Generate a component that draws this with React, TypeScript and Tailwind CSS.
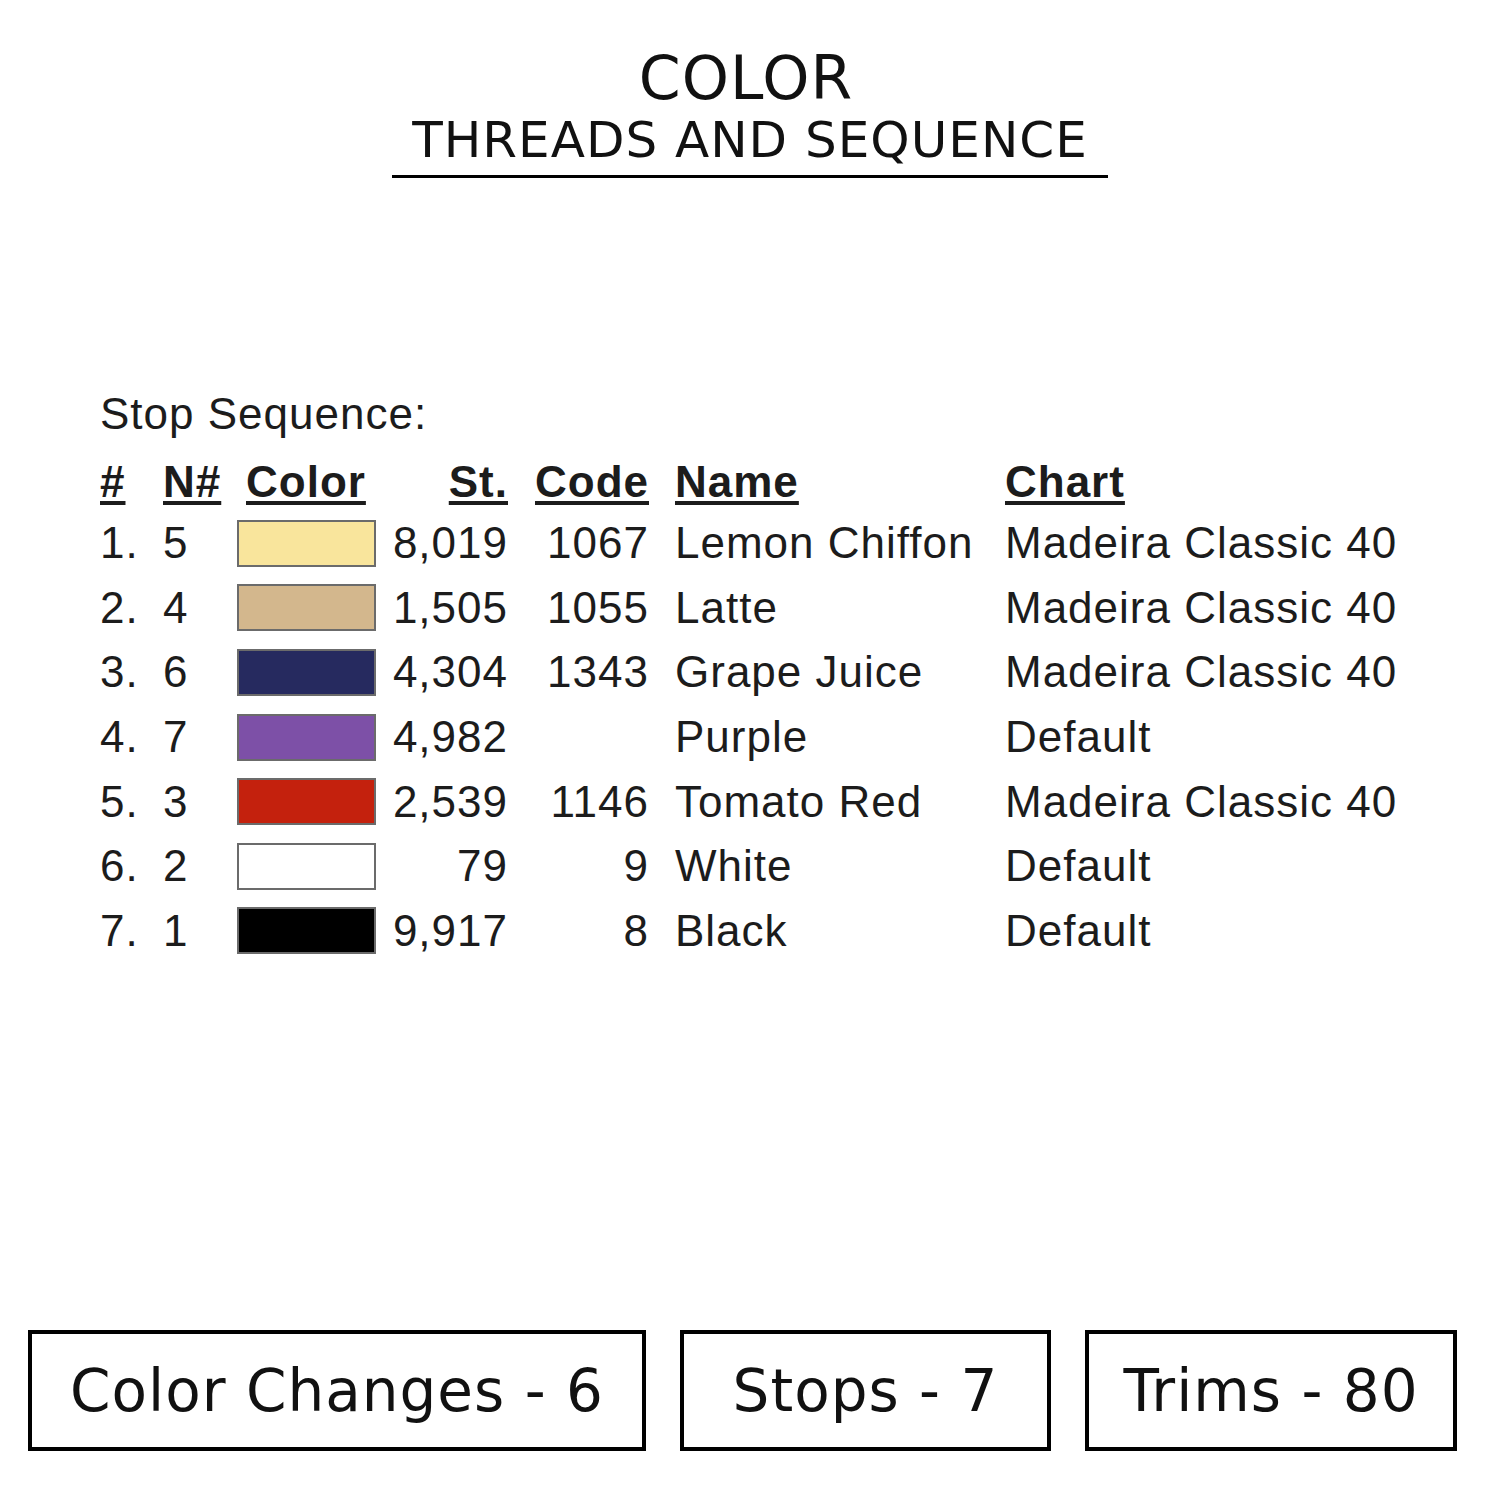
const rows = [
  { n: "1.", nn: "5", color: "#f9e59c", st: "8,019", code: "1067", name: "Lemon Chiffon", chart: "Madeira Classic 40" },
  { n: "2.", nn: "4", color: "#d3b78d", st: "1,505", code: "1055", name: "Latte", chart: "Madeira Classic 40" },
  { n: "3.", nn: "6", color: "#262a5f", st: "4,304", code: "1343", name: "Grape Juice", chart: "Madeira Classic 40" },
  { n: "4.", nn: "7", color: "#7d50a7", st: "4,982", code: "", name: "Purple", chart: "Default" },
  { n: "5.", nn: "3", color: "#c4210d", st: "2,539", code: "1146", name: "Tomato Red", chart: "Madeira Classic 40" },
  { n: "6.", nn: "2", color: "#ffffff", st: "79", code: "9", name: "White", chart: "Default" },
  { n: "7.", nn: "1", color: "#000000", st: "9,917", code: "8", name: "Black", chart: "Default" },
];

export default function App() {
  return (
    <main className="w-[1500px] h-[1500px] bg-white flex flex-col text-[#111]">

      {/* Title */}
      <div className="flex flex-col items-center pt-[48px] font-['DejaVu_Sans',sans-serif]">
        <h1 className="text-[60px] leading-none tracking-[1px] -translate-x-[4px]">COLOR</h1>
        <h2 className="mt-[7px] text-[50px] leading-none tracking-[1px]">THREADS AND SEQUENCE</h2>
        <div className="mt-[10px] w-[716px] h-[3px] bg-black" />
      </div>

      {/* Stop sequence table */}
      <div className="mt-[214px] pl-[100px] font-['Liberation_Sans',Arial,sans-serif] text-[#1c1c1c] tracking-[1px]">
        <p className="text-[44px] leading-none">Stop Sequence:</p>

        <div className="mt-[17px] grid grid-cols-[63px_74px_139px_132px_141px_356px_auto] grid-rows-[58px] auto-rows-[64.6px] items-center text-[44px] leading-none">
          {/* header */}
          <span className="font-bold underline decoration-[4px] underline-offset-[4px]">#</span>
          <span className="font-bold underline decoration-[4px] underline-offset-[4px]">N#</span>
          <span className="pl-[9px] font-bold underline decoration-[4px] underline-offset-[4px]">Color</span>
          <span className="text-right font-bold underline decoration-[4px] underline-offset-[4px]">St.</span>
          <span className="text-right font-bold underline decoration-[4px] underline-offset-[4px]">Code</span>
          <span className="pl-[26px] font-bold underline decoration-[4px] underline-offset-[4px]">Name</span>
          <span className="font-bold underline decoration-[4px] underline-offset-[4px]">Chart</span>

          {rows.map((r) => (
            <div key={r.n} className="contents">
              <span>{r.n}</span>
              <span>{r.nn}</span>
              <div className="h-[47px] w-[139px] border-2 border-[#6b6b6b]" style={{ backgroundColor: r.color }} />
              <span className="text-right">{r.st}</span>
              <span className="text-right">{r.code}</span>
              <span className="pl-[26px]">{r.name}</span>
              <span>{r.chart}</span>
            </div>
          ))}
        </div>
      </div>

      {/* Summary boxes */}
      <div className="mt-auto mb-[49px] flex gap-[34px] pl-[28px] font-['DejaVu_Sans',sans-serif] text-[58px] leading-none">
        <div className="w-[618px] h-[121px] border-[4px] border-black flex items-center justify-center tracking-[1px]">Color Changes - 6</div>
        <div className="w-[371px] h-[121px] border-[4px] border-black flex items-center justify-center tracking-[1px]">Stops - 7</div>
        <div className="w-[372px] h-[121px] border-[4px] border-black flex items-center justify-center tracking-[1px]">Trims - 80</div>
      </div>
    </main>
  );
}
